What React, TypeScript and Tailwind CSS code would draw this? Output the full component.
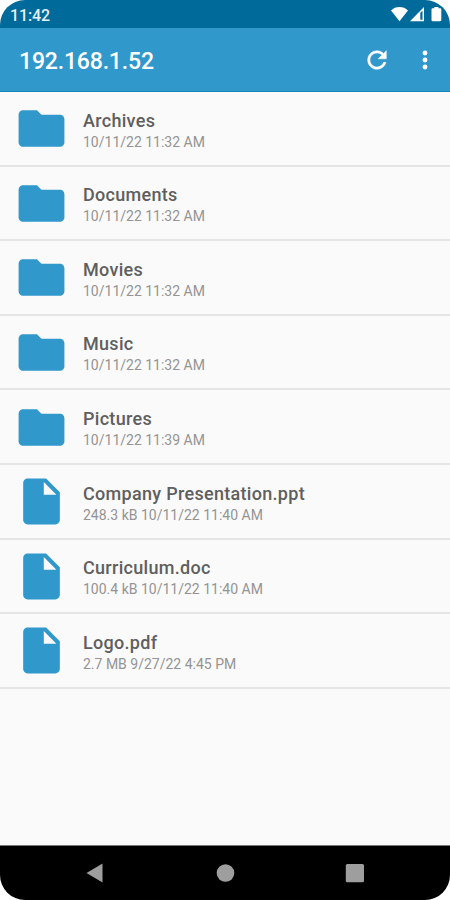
type Entry = { name: string; detail: string; kind: 'folder' | 'file' };

const entries: Entry[] = [
  { name: 'Archives', detail: '10/11/22 11:32 AM', kind: 'folder' },
  { name: 'Documents', detail: '10/11/22 11:32 AM', kind: 'folder' },
  { name: 'Movies', detail: '10/11/22 11:32 AM', kind: 'folder' },
  { name: 'Music', detail: '10/11/22 11:32 AM', kind: 'folder' },
  { name: 'Pictures', detail: '10/11/22 11:39 AM', kind: 'folder' },
  { name: 'Company Presentation.ppt', detail: '248.3 kB 10/11/22 11:40 AM', kind: 'file' },
  { name: 'Curriculum.doc', detail: '100.4 kB 10/11/22 11:40 AM', kind: 'file' },
  { name: 'Logo.pdf', detail: '2.7 MB 9/27/22 4:45 PM', kind: 'file' },
];

function EntryIcon({ kind }: { kind: Entry['kind'] }) {
  return (
    <svg viewBox="0 0 24 24" className="size-[55px] shrink-0 fill-[#3198cb]">
      {kind === 'folder' ? (
        <path d="M10 4H4c-1.1 0-1.99.9-1.99 2L2 18c0 1.1.9 2 2 2h16c1.1 0 2-.9 2-2V8c0-1.1-.9-2-2-2h-8l-2-2z" />
      ) : (
        <path d="M6 2c-1.1 0-1.99.9-1.99 2L4 20c0 1.1.89 2 1.99 2H18c1.1 0 2-.9 2-2V8l-6-6H6zm7 7V3.5L18.5 9H13z" />
      )}
    </svg>
  );
}

function StatusBar() {
  return (
    <div className="flex h-7 shrink-0 items-center justify-between bg-[#006a9b] pt-0.5 pr-[7px] pl-2.5 text-white">
      <span className="pt-px text-base leading-none font-medium tracking-[-0.100px] text-[#e6f0f5]">11:42</span>
      <svg viewBox="0 0 52 16" className="h-4 w-[52px] fill-white">
        <path d="M0 3.400C2.400 1.200 5.200 0 8.500 0s6.100 1.200 8.500 3.400L8.500 14.200z" />
        <path fillRule="evenodd" d="M19 14.200L33 0v14.200zM29.300 5.800v6.900h2.200V3.800z" />
        <path d="M43.300 0h4.200v1.300h1.500c.8 0 1.300.5 1.300 1.200v10.500c0 .7-.5 1.200-1.300 1.200h-7.200c-.8 0-1.300-.5-1.300-1.200V2.500c0-.7.500-1.200 1.300-1.200h1.500z" />
      </svg>
    </div>
  );
}

function AppBar() {
  return (
    <header className="flex h-16 shrink-0 items-center border-b border-[#0d86be] bg-[#3198cb] pt-px pl-[19px] text-white">
      <h1 className="flex-1 pt-[3px] text-[23px] leading-none font-medium tracking-[-0.170px]">192.168.1.52</h1>
      <svg viewBox="0 0 24 24" className="mr-[20px] size-7 fill-white stroke-white stroke-[0.400]">
        <path d="M17.650 6.350C16.200 4.900 14.210 4 12 4c-4.420 0-7.990 3.580-7.990 8s3.570 8 7.990 8c3.730 0 6.840-2.550 7.730-6h-2.080c-.82 2.330-3.040 4-5.650 4-3.310 0-6-2.690-6-6s2.690-6 6-6c1.660 0 3.140.69 4.220 1.780L13 11h7V4l-2.350 2.350z" />
      </svg>
      <svg viewBox="0 0 24 24" className="mr-[11px] size-7 fill-white">
        <circle cx="12" cy="6" r="2.100" />
        <circle cx="12" cy="12" r="2.100" />
        <circle cx="12" cy="18" r="2.100" />
      </svg>
    </header>
  );
}

export default function App() {
  return (
    <div className="bg-white font-['Roboto','Liberation_Sans',sans-serif]">
      <div className="flex h-[900px] w-[450px] flex-col overflow-hidden rounded-[25px] bg-[#fafafa]">
        <StatusBar />
        <AppBar />
        <ul className="flex-1">
          {entries.map((entry) => (
            <li
              key={entry.name}
              className="flex h-[74.600px] items-center gap-[14px] border-b-2 border-[#e5e5e5] pt-px pl-[14px]"
            >
              <EntryIcon kind={entry.kind} />
              <div className="pt-[3.500px]">
                <div className="text-[18px] leading-[22px] font-medium tracking-[0.3px] text-[#5f5f5f]">{entry.name}</div>
                <div className="text-[14px] leading-[20px] text-[#949494]">{entry.detail}</div>
              </div>
            </li>
          ))}
        </ul>
        <nav className="h-[55px] shrink-0 border-t border-[#777] bg-black">
          <svg viewBox="0 0 450 54" className="h-[54px] w-[450px] fill-[#9e9e9e]">
            <path d="M102.500 17.500v19L86.500 27z" />
            <circle cx="225.500" cy="27" r="8.800" />
            <rect x="345.800" y="18" width="18.200" height="18.200" rx="1.500" />
          </svg>
        </nav>
      </div>
    </div>
  );
}
